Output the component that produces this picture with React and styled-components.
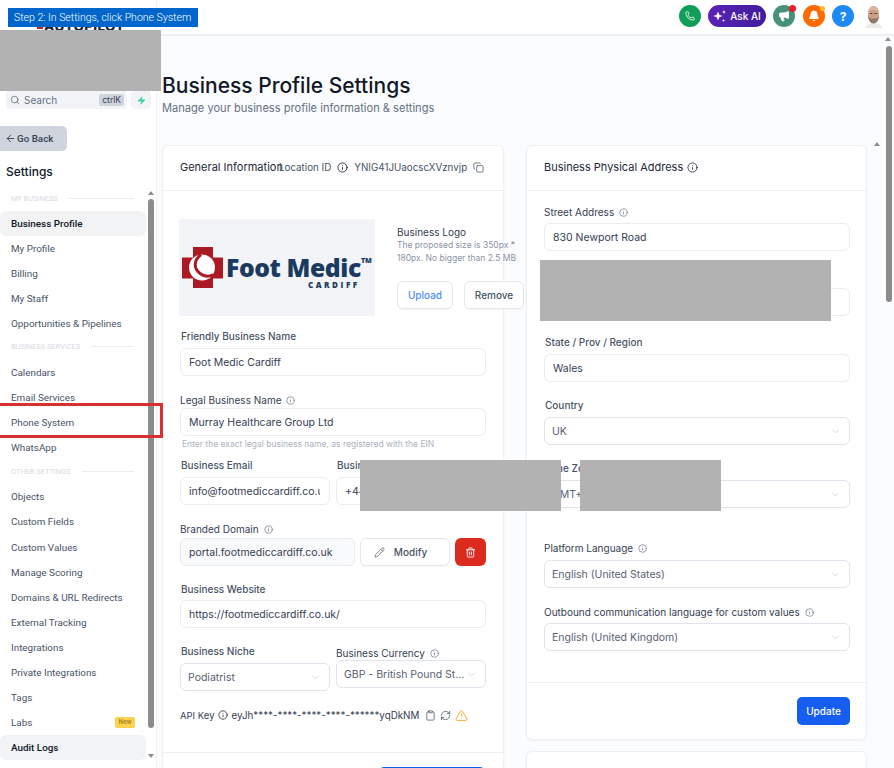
import React from "react";
import styled, { createGlobalStyle } from "styled-components";
import {
  ArrowLeft,
  Bell,
  ChevronDown,
  Clipboard,
  Copy,
  Info,
  Megaphone,
  Pencil,
  Phone,
  RefreshCw,
  Search,
  Trash2,
  TriangleAlert,
  Zap,
} from "lucide-react";

const GlobalStyle = createGlobalStyle`
  html, body {
    margin: 0;
    padding: 0;
    height: 768px;
    overflow: hidden;
    background: #fff;
  }
  * { box-sizing: border-box; }
`;

const Page = styled.div`
  position: relative;
  display: flex;
  width: 894px;
  height: 768px;
  overflow: hidden;
  font-family: Inter, "Liberation Sans", sans-serif;
  color: #101828;
`;

/* annotation layer on top of the screenshot */
const StepTag = styled.div`
  position: absolute;
  left: 8px;
  top: 8px;
  width: 190px;
  height: 19px;
  padding-left: 6px;
  background: #0066cc;
  color: #fff;
  font-family: Roboto, sans-serif;
  font-size: 10.5px;
  font-weight: 300;
  line-height: 19px;
  white-space: nowrap;
  z-index: 5;
`;

const Redact = styled.div`
  position: absolute;
  left: ${(p) => p.$x}px;
  top: ${(p) => p.$y}px;
  width: ${(p) => p.$w}px;
  height: ${(p) => p.$h}px;
  background: #b2b2b2;
  z-index: 4;
`;

const Highlight = styled.div`
  position: absolute;
  left: -3px;
  top: 403px;
  width: 166px;
  height: 35px;
  border: 3px solid #d9302f;
  z-index: 4;
`;

/* sidebar */
const Sidebar = styled.aside`
  display: flex;
  flex-direction: column;
  flex: 0 0 157px;
  height: 768px;
  border-right: 1px solid #f0f1f4;
  background: #fff;
`;

const LogoArea = styled.div`
  height: 91px;
  padding: 17px 0 0 37px;
  display: flex;
  align-items: flex-start;
  gap: 1px;
`;

const LogoMark = styled.span`
  width: 6px;
  height: 8px;
  margin-top: 4px;
  background: #c9252d;
`;

const LogoText = styled.span`
  font-size: 13.5px;
  line-height: 19px;
  font-weight: 800;
  color: #1d2433;
  letter-spacing: 0.3px;
`;

const SearchRow = styled.div`
  display: flex;
  gap: 4px;
  padding-left: 6px;
`;

const SearchBox = styled.div`
  display: flex;
  align-items: center;
  width: 121px;
  height: 18px;
  padding: 0 3px 0 4px;
  gap: 4px;
  border-radius: 4px;
  background: #f2f4f7;
  color: #667085;
  font-size: 10px;
`;

const Kbd = styled.span`
  margin-left: auto;
  padding: 0 3px;
  height: 12px;
  line-height: 12px;
  border-radius: 2px;
  background: #d0d5dd;
  color: #344054;
  font-size: 8.5px;
`;

const BoltBox = styled.div`
  display: flex;
  align-items: center;
  justify-content: center;
  width: 20px;
  height: 18px;
  border-radius: 4px;
  background: #f2f4f7;
  color: #34d399;
`;

const BackButton = styled.div`
  display: flex;
  align-items: center;
  gap: 1px;
  width: 67px;
  height: 25px;
  margin-top: 17px;
  padding-left: 5px;
  border-radius: 0 5px 5px 0;
  background: #d0d5dd;
  color: #344054;
  font-family: Roboto, sans-serif;
  font-size: 9.8px;
  font-weight: 500;
`;

const SideTitle = styled.div`
  margin: 13px 0 10px 6px;
  height: 16px;
  font-size: 12px;
  line-height: 16px;
  font-weight: 500;
  color: #101828;
`;

const NavWrap = styled.div`
  flex: 1;
  display: flex;
  min-height: 0;
  overflow: hidden;
`;

const NavList = styled.div`
  width: 146px;
  flex: 0 0 146px;
  font-family: Roboto, sans-serif;
`;

const SectionHead = styled.div`
  display: flex;
  align-items: center;
  gap: 11px;
  height: ${(p) => p.$h}px;
  padding: ${(p) => p.$pt}px 12px 5px 11px;
  font-size: 7.4px;
  line-height: 16px;
  color: #d7dae2;
  white-space: nowrap;
  &::after {
    content: "";
    flex: 1;
    height: 1px;
    background: #eaecf0;
  }
`;

const NavItem = styled.div`
  display: flex;
  align-items: center;
  justify-content: space-between;
  height: 25.1px;
  padding: 0 11px 0 11px;
  border-radius: 6px;
  font-size: 9.9px;
  font-weight: ${(p) => (p.$active ? 500 : 400)};
  color: ${(p) => (p.$active ? "#101828" : "#475467")};
  background: ${(p) => (p.$active ? "#f2f3f5" : "transparent")};
  white-space: nowrap;
`;

const NewBadge = styled.span`
  width: 20px;
  height: 11px;
  border-radius: 2px;
  border: 1px solid #f6cf55;
  background: #fcd34d;
  color: #ad8a2a;
  font-size: 6.5px;
  font-weight: 700;
  line-height: 9px;
  text-align: center;
`;

const Gutter = styled.div`
  position: relative;
  flex: 0 0 ${(p) => p.$w}px;
`;

const Thumb = styled.div`
  position: absolute;
  left: ${(p) => p.$left}px;
  top: ${(p) => p.$top}px;
  width: 6px;
  height: ${(p) => p.$h}px;
  border-radius: 3px;
  background: #8c8c8c;
`;

const Arrow = styled.div`
  position: absolute;
  left: ${(p) => p.$left}px;
  top: ${(p) => p.$top}px;
  width: 0;
  height: 0;
  border-left: 3.5px solid transparent;
  border-right: 3.5px solid transparent;
  ${(p) =>
    p.$down
      ? "border-top: 4px solid #8c8c8c;"
      : "border-bottom: 4px solid #8c8c8c;"}
`;

/* main column */
const Main = styled.main`
  flex: 1;
  min-width: 0;
  display: flex;
  flex-direction: column;
`;

const TopBar = styled.header`
  display: flex;
  align-items: center;
  justify-content: flex-end;
  flex: 0 0 36px;
  padding: 0 12px 2px 0;
  border-bottom: 2px solid #eceef1;
  background: #fff;
`;

const RoundIcon = styled.div`
  position: relative;
  display: flex;
  align-items: center;
  justify-content: center;
  width: 22px;
  height: 22px;
  margin-left: ${(p) => p.$ml}px;
  border-radius: 50%;
  background: ${(p) => p.$bg};
  color: #fff;
  font-size: 12px;
  font-weight: 700;
`;

const Dot = styled.span`
  position: absolute;
  right: ${(p) => p.$r}px;
  top: ${(p) => p.$t}px;
  width: ${(p) => p.$s}px;
  height: ${(p) => p.$s}px;
  border-radius: 50%;
  background: ${(p) => p.$bg};
`;

const AskAi = styled.div`
  display: flex;
  align-items: center;
  justify-content: center;
  gap: 3px;
  width: 58px;
  height: 22px;
  margin-left: 7px;
  border-radius: 11px;
  background: linear-gradient(90deg, #5b21b6, #3f1d9b);
  color: #fff;
  font-size: 10px;
  font-weight: 500;
`;

const Avatar = styled.svg`
  width: 17px;
  height: 23px;
  margin-left: 11px;
`;

const ContentWrap = styled.div`
  flex: 1;
  display: flex;
  min-height: 0;
  background: #fbfcfd;
`;

const Content = styled.div`
  position: relative;
  flex: 1;
  min-width: 0;
  padding: 35px 0 0 5px;
  overflow: hidden;
`;

const PageTitle = styled.h1`
  margin: 0;
  font-size: 21px;
  line-height: 30px;
  font-weight: 500;
  color: #101828;
`;

const PageSub = styled.p`
  margin: 0 0 29px;
  font-size: 11.1px;
  line-height: 15px;
  color: #667085;
`;

const Columns = styled.div`
  display: grid;
  grid-template-columns: 342px 341px;
  column-gap: 22px;
  align-items: start;
`;

const Stack = styled.div`
  display: flex;
  flex-direction: column;
  gap: 11px;
`;

const Card = styled.section`
  border: 1px solid #eef0f3;
  border-radius: 6px;
  background: #fff;
  box-shadow: 0 1px 2px rgba(16, 24, 40, 0.05);
  min-height: ${(p) => p.$min || 0}px;
`;

const CardHead = styled.div`
  display: flex;
  align-items: center;
  height: 45px;
  padding: 0 17px 2px;
  border-bottom: 1px solid #eef0f3;
  font-size: 11px;
  color: #1d2939;
  white-space: nowrap;
`;

const HeadTitle = styled.span`
  flex: 0 0 ${(p) => p.$w || 99}px;
  min-width: 0;
`;

const LocationId = styled.span`
  display: flex;
  align-items: center;
  gap: 6px;
  font-size: 9.8px;
  color: #475467;
`;

const CardBody = styled.div`
  padding: 0 ${(p) => p.$right || 17}px 0 17px;
`;

const LogoRow = styled.div`
  display: flex;
  margin: 28px 0 0 -1px;
  height: 97px;
`;

const LogoFrame = styled.div`
  display: flex;
  align-items: center;
  flex: 0 0 196px;
  padding-left: 3px;
  border-radius: 2px;
  background: #f2f4f7;
`;

const BrandText = styled.div`
  margin-left: 3px;
  padding-top: 8px;
  color: #1b3a5f;
  font-family: "Open Sans", sans-serif;
  font-weight: 800;
  font-size: 24.7px;
  line-height: 25px;
  letter-spacing: -0.4px;
  white-space: nowrap;
  sup {
    font-size: 7px;
    line-height: 7px;
    vertical-align: 14px;
    letter-spacing: 0;
  }
`;

const BrandSub = styled.div`
  margin: 0 12px 0 0;
  text-align: right;
  font-size: 8px;
  line-height: 9px;
  letter-spacing: 2.6px;
`;

const LogoSide = styled.div`
  margin-left: 22px;
  width: 127px;
  flex: 0 0 127px;
`;

const LogoTitle = styled.div`
  margin-top: 6px;
  font-size: 10px;
  line-height: 14px;
  color: #344054;
`;

const LogoHint = styled.div`
  font-size: 8.5px;
  line-height: 13px;
  color: #8b93a5;
  white-space: nowrap;
`;

const LogoButtons = styled.div`
  display: flex;
  gap: 11px;
  margin-top: 16px;
`;

const GhostButton = styled.div`
  display: flex;
  align-items: center;
  justify-content: center;
  flex: 0 0 ${(p) => p.$w}px;
  gap: 9px;
  height: 28px;
  padding-right: ${(p) => p.$pr || 0}px;
  border: 1px solid #e4e7ec;
  border-radius: 6px;
  background: #fff;
  box-shadow: 0 1px 1px rgba(16, 24, 40, 0.04);
  font-size: 10px;
  font-weight: 500;
  color: ${(p) => p.$color || "#475467"};
`;

const Field = styled.div`
  margin-top: ${(p) => p.$mt}px;
  min-width: 0;
`;

const Label = styled.label`
  display: flex;
  align-items: center;
  gap: 5px;
  height: 16px;
  margin-bottom: ${(p) => p.$gap}px;
  padding-left: ${(p) => p.$in || 0}px;
  font-size: 10px;
  font-weight: ${(p) => (p.$soft ? 500 : 400)};
  color: ${(p) => (p.$soft ? "#475467" : "#344054")};
  white-space: nowrap;
  svg {
    color: #667085;
  }
`;

const Input = styled.div`
  height: 28px;
  padding: 0 9px 0 8px;
  border: 1px solid #eaecf0;
  border-radius: 6px;
  background: #fff;
  font-size: 10.5px;
  line-height: 27px;
  color: #344054;
  white-space: nowrap;
  overflow: clip;
  overflow-clip-margin: content-box;
`;

const DomainInput = styled(Input)`
  flex: 0 0 175px;
  background: #f9fafb;
`;

const SelectBox = styled.div`
  display: flex;
  align-items: center;
  justify-content: space-between;
  height: 28px;
  padding: 0 8px 0 7px;
  border: 1px solid #e1e3ec;
  border-radius: 6px;
  background: #fff;
  font-size: 10.5px;
  color: #596273;
  white-space: nowrap;
  svg {
    flex: none;
    color: #c3c7d0;
  }
`;

const Help = styled.div`
  height: 14px;
  margin-top: 1px;
  padding-left: 2px;
  font-size: 8.5px;
  line-height: 14px;
  color: #adb3c0;
  white-space: nowrap;
`;

const TwoCols = styled.div`
  display: grid;
  grid-template-columns: 150px 150px;
  column-gap: 6px;
  align-items: start;
`;

const DomainRow = styled.div`
  display: flex;
  gap: 5px;
`;

const DangerButton = styled.div`
  display: flex;
  align-items: center;
  justify-content: center;
  flex: 0 0 31px;
  height: 28px;
  border-radius: 6px;
  background: #dc2a1e;
  color: #fff;
`;

const ApiRow = styled.div`
  display: flex;
  align-items: center;
  gap: 3px;
  height: 16px;
  margin-top: 16px;
  font-size: 9.5px;
  color: #344054;
  white-space: nowrap;
`;

const ApiKey = styled.span`
  margin-left: 1px;
  font-size: 9.8px;
`;

const ApiTools = styled.span`
  display: flex;
  align-items: center;
  gap: 4px;
  margin-left: 3px;
`;

const CardFoot = styled.div`
  display: flex;
  justify-content: flex-end;
  margin-top: ${(p) => p.$mt}px;
  padding: 14px ${(p) => p.$pr}px 14px 0;
  border-top: 1px solid #eef0f3;
`;

const PrimaryButton = styled.div`
  display: flex;
  align-items: center;
  justify-content: center;
  width: ${(p) => p.$w}px;
  height: 28px;
  border-radius: 5px;
  background: #155eef;
  color: #fff;
  font-size: 10px;
  font-weight: 500;
`;

const navGroups = [
  {
    title: "MY BUSINESS",
    h: 21,
    pt: 1,
    items: ["Business Profile", "My Profile", "Billing", "My Staff", "Opportunities & Pipelines"],
  },
  {
    title: "BUSINESS SERVICES",
    h: 23,
    pt: 3,
    items: ["Calendars", "Email Services", "Phone System", "WhatsApp"],
  },
  {
    title: "OTHER SETTINGS",
    h: 24.5,
    pt: 4.5,
    items: [
      "Objects",
      "Custom Fields",
      "Custom Values",
      "Manage Scoring",
      "Domains & URL Redirects",
      "External Tracking",
      "Integrations",
      "Private Integrations",
      "Tags",
      "Labs",
      "Audit Logs",
    ],
  },
];

const activeItems = ["Business Profile", "Audit Logs"];

function Tip({ size = 9 }) {
  return <Info size={size} strokeWidth={1.8} />;
}

function Select({ children }) {
  return (
    <SelectBox>
      {children}
      <ChevronDown size={11} strokeWidth={1.5} />
    </SelectBox>
  );
}

function FootMedicLogo() {
  return (
    <>
      <svg width="41" height="41" viewBox="0 0 41 41">
        <path d="M11 0h20v10.500h10v21H31V41H11V31.500H0v-21h11z" fill="#ab1a22" />
        <circle cx="20" cy="20.500" r="13" fill="#fff" />
        <path
          d="M19 7.500C12 13 11 21 18 26.500C22 29.500 27 30 31 27.500"
          fill="none"
          stroke="#ab1a22"
          strokeWidth="3"
        />
      </svg>
      <BrandText>
        Foot Medic<sup>TM</sup>
        <BrandSub>CARDIFF</BrandSub>
      </BrandText>
    </>
  );
}

function AiStars() {
  return (
    <svg width="14" height="14" viewBox="0 0 14 14" fill="currentColor">
      <path d="M5 2.500l1.300 3.200L9.500 7 6.300 8.300 5 11.500 3.700 8.300.5 7l3.200-1.300z" />
      <path d="M11 1l.6 1.400L13 3l-1.400.6L11 5l-.6-1.400L9 3l1.400-.6z" />
      <path d="M10.500 10l.45 1.050L12 11.500l-1.050.45L10.500 13l-.45-1.050L9 11.500l1.050-.45z" />
    </svg>
  );
}

function ProfileCard() {
  return (
    <Card>
      <CardHead>
        <HeadTitle>General Information</HeadTitle>
        <LocationId>
          Location ID
          <Info size={11} strokeWidth={1.8} color="#101828" />
          YNIG41JUaocscXVznvjp
          <Copy size={11} strokeWidth={1.6} />
        </LocationId>
      </CardHead>
      <CardBody>
        <LogoRow>
          <LogoFrame>
            <FootMedicLogo />
          </LogoFrame>
          <LogoSide>
            <LogoTitle>Business Logo</LogoTitle>
            <LogoHint>The proposed size is 350px *</LogoHint>
            <LogoHint>180px. No bigger than 2.5 MB</LogoHint>
            <LogoButtons>
              <GhostButton $w={56} $color="#4d8df6">Upload</GhostButton>
              <GhostButton $w={60}>Remove</GhostButton>
            </LogoButtons>
          </LogoSide>
        </LogoRow>

        <Field $mt={12}>
          <Label $gap={4} $in={1} $soft>Friendly Business Name</Label>
          <Input>Foot Medic Cardiff</Input>
        </Field>

        <Field $mt={16}>
          <Label $gap={0}>Legal Business Name <Tip /></Label>
          <Input>Murray Healthcare Group Ltd</Input>
          <Help>Enter the exact legal business name, as registered with the EIN</Help>
        </Field>

        <TwoCols>
          <Field $mt={6}>
            <Label $gap={4} $in={1} $soft>Business Email</Label>
            <Input>info@footmediccardiff.co.uk</Input>
          </Field>
          <Field $mt={6}>
            <Label $gap={4} $in={1} $soft>Business Phone</Label>
            <Input>+44</Input>
          </Field>
        </TwoCols>

        <Field $mt={16}>
          <Label $gap={1}>Branded Domain <Tip /></Label>
          <DomainRow>
            <DomainInput>portal.footmediccardiff.co.uk</DomainInput>
            <GhostButton $w={90} $pr={9}>
              <Pencil size={11} strokeWidth={1.5} />
              Modify
            </GhostButton>
            <DangerButton><Trash2 size={11} strokeWidth={2} /></DangerButton>
          </DomainRow>
        </Field>

        <Field $mt={15}>
          <Label $gap={3} $in={1} $soft>Business Website</Label>
          <Input>https://footmediccardiff.co.uk/</Input>
        </Field>

        <TwoCols>
          <Field $mt={15}>
            <Label $gap={4} $in={1} $soft>Business Niche</Label>
            <Select>Podiatrist</Select>
          </Field>
          <Field $mt={17}>
            <Label $gap={-1}>Business Currency <Tip /></Label>
            <Select>GBP - British Pound St...</Select>
          </Field>
        </TwoCols>

        <ApiRow>
          API Key
          <Info size={10} strokeWidth={1.8} color="#101828" />
          <ApiKey>eyJh****-****-****-****-******yqDkNM</ApiKey>
          <ApiTools>
            <Clipboard size={11} strokeWidth={1.5} />
            <RefreshCw size={11} strokeWidth={1.5} />
            <TriangleAlert size={13} strokeWidth={1.6} color="#f59e0b" />
          </ApiTools>
        </ApiRow>
      </CardBody>
      <CardFoot $mt={29} $pr={18}>
        <PrimaryButton $w={106}>Update</PrimaryButton>
      </CardFoot>
    </Card>
  );
}

function AddressCard() {
  return (
    <Card>
      <CardHead>
        <HeadTitle $w={143}>Business Physical Address</HeadTitle>
        <Info size={11} strokeWidth={1.8} />
      </CardHead>
      <CardBody $right={16}>
        <Field $mt={13}>
          <Label $gap={3}>Street Address <Tip /></Label>
          <Input>830 Newport Road</Input>
        </Field>
        <Field $mt={16}>
          <Label $gap={5} $in={1} $soft>City</Label>
          <Input>Cardiff</Input>
        </Field>
        <Field $mt={18}>
          <Label $gap={4} $in={1} $soft>State / Prov / Region</Label>
          <Input>Wales</Input>
        </Field>
        <Field $mt={15}>
          <Label $gap={4} $in={1} $soft>Country</Label>
          <Select>UK</Select>
        </Field>
        <Field $mt={15}>
          <Label $gap={4} $in={1} $soft>Time Zone</Label>
          <Select>GMT+00:00</Select>
        </Field>
        <Field $mt={32}>
          <Label $gap={4}>Platform Language <Tip /></Label>
          <Select>English (United States)</Select>
        </Field>
        <Field $mt={16}>
          <Label $gap={3}>Outbound communication language for custom values <Tip /></Label>
          <Select>English (United Kingdom)</Select>
        </Field>
      </CardBody>
      <CardFoot $mt={31} $pr={16}>
        <PrimaryButton $w={53}>Update</PrimaryButton>
      </CardFoot>
    </Card>
  );
}

export default function App() {
  return (
    <Page>
      <GlobalStyle />
      <StepTag>Step 2: In Settings, click Phone System</StepTag>
      <Redact $x={0} $y={30} $w={161} $h={61} />
      <Redact $x={540} $y={260} $w={291} $h={61} />
      <Redact $x={360} $y={460} $w={201} $h={51} />
      <Redact $x={580} $y={460} $w={141} $h={51} />
      <Highlight />

      <Sidebar>
        <LogoArea>
          <LogoMark />
          <LogoText>AUTOPILOT</LogoText>
        </LogoArea>
        <SearchRow>
          <SearchBox>
            <Search size={10} strokeWidth={2} />
            Search
            <Kbd>ctrlK</Kbd>
          </SearchBox>
          <BoltBox><Zap size={9} fill="currentColor" strokeWidth={1} /></BoltBox>
        </SearchRow>
        <BackButton>
          <ArrowLeft size={11} strokeWidth={2} />
          Go Back
        </BackButton>
        <SideTitle>Settings</SideTitle>
        <NavWrap>
          <NavList>
            {navGroups.map((group) => (
              <div key={group.title}>
                <SectionHead $h={group.h} $pt={group.pt}>{group.title}</SectionHead>
                {group.items.map((item) => (
                  <NavItem key={item} $active={activeItems.includes(item)}>
                    {item}
                    {item === "Labs" && <NewBadge>New</NewBadge>}
                  </NavItem>
                ))}
              </div>
            ))}
          </NavList>
          <Gutter $w={10}>
            <Arrow $left={2} $top={1} />
            <Thumb $left={2} $top={9} $h={529} />
            <Arrow $left={2} $top={564} $down />
          </Gutter>
        </NavWrap>
      </Sidebar>

      <Main>
        <TopBar>
          <RoundIcon $ml={0} $bg="#0f9d58"><Phone size={10} strokeWidth={2} /></RoundIcon>
          <AskAi>
            <AiStars />
            Ask AI
          </AskAi>
          <RoundIcon $ml={7} $bg="#46917a">
            <Megaphone size={12} fill="currentColor" strokeWidth={2} />
            <Dot $r={-1} $t={0} $s={7} $bg="#ee1c25" />
          </RoundIcon>
          <RoundIcon $ml={8} $bg="#ff6a00">
            <Bell size={12} fill="currentColor" strokeWidth={2} />
            <Dot $r={0} $t={1} $s={5} $bg="#fbbf24" />
          </RoundIcon>
          <RoundIcon $ml={7} $bg="#1e88f5">?</RoundIcon>
          <Avatar viewBox="0 0 17 23">
            <path d="M0 23c1-3 4-5 8.500-5s7.500 2 8.500 5z" fill="#eceae6" />
            <ellipse cx="8.500" cy="9" rx="5.500" ry="8" fill="#cf9f86" />
            <path d="M3.500 6.500C4 3 6 1.500 8.500 1.500S13 3 13.500 6.500C11 4.500 6 4.500 3.500 6.500z" fill="#dcb39c" />
            <path d="M3 10.500c1 2.500 2 2.500 3 3h5c1-.5 2-.5 3-3 0 4.500-2.500 8-5.500 8S3 15 3 10.500z" fill="#8f7a6a" />
            <rect x="5" y="8" width="2.500" height="1" fill="#5b4336" />
            <rect x="9.500" y="8" width="2.500" height="1" fill="#5b4336" />
          </Avatar>
        </TopBar>
        <ContentWrap>
          <Content>
            <PageTitle>Business Profile Settings</PageTitle>
            <PageSub>Manage your business profile information &amp; settings</PageSub>
            <Columns>
              <ProfileCard />
              <Stack>
                <AddressCard />
                <Card $min={60} />
              </Stack>
            </Columns>
            <Arrow $left={717} $top={106} />
          </Content>
          <Gutter $w={10}>
            <Arrow $left={1} $top={1} />
            <Thumb $left={2} $top={10} $h={256} />
          </Gutter>
        </ContentWrap>
      </Main>
    </Page>
  );
}
